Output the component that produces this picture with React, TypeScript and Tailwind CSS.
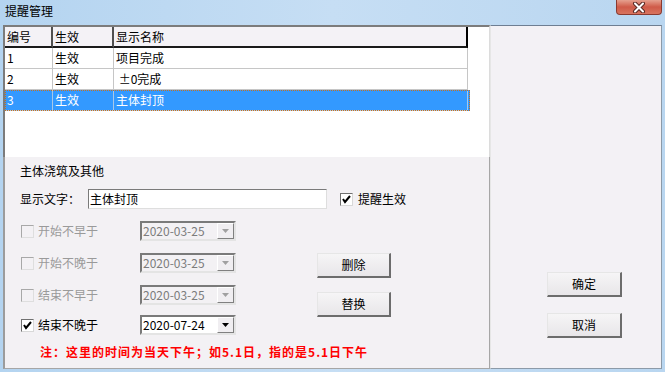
import React from "react";

const font = "font-['Noto_Sans_CJK_SC','Liberation_Sans',sans-serif]";

const cols = ["w-[48px]", "w-[61px]", "w-[354px]"];

const rows = [
  ["1", "生效", "项目完成"],
  ["2", "生效", " ±0完成"],
  ["3", "生效", "主体封顶"],
];

const CheckBox = ({ checked, disabled }: { checked?: boolean; disabled?: boolean }) => (
  <div
    className={
      "w-[13px] h-[13px] border flex items-center justify-center " +
      (disabled
        ? "bg-[#f3f1f4] border-t-[#a8a8a8] border-l-[#a8a8a8] border-b-[#dedede] border-r-[#dedede]"
        : "bg-white border-t-[#707070] border-l-[#707070] border-b-[#d8d8d8] border-r-[#d8d8d8]")
    }
  >
    {checked && (
      <svg width="9" height="9" viewBox="0 0 9 9">
        <polyline points="1,4 3,7 8,1" fill="none" stroke="#000" strokeWidth="2" />
      </svg>
    )}
  </div>
);

const Combo = ({ value, disabled }: { value: string; disabled?: boolean }) => (
  <div className="w-[96px] h-[20px] flex border-2 border-t-[#7a7a7a] border-l-[#7a7a7a] border-b-[#e4e4e4] border-r-[#e4e4e4]">
    <div
      className={
        "flex-1 pl-[1px] leading-[16px] text-[12px] " +
        (disabled ? "bg-[#f3f1f4] text-[#7c7c7c]" : "bg-white text-black")
      }
    >
      {value}
    </div>
    <div className="w-[17px] h-full bg-[#f0eef1] border border-t-white border-l-white border-b-[#808080] border-r-[#808080] flex items-center justify-center">
      <svg width="7" height="4" viewBox="0 0 7 4">
        <polygon points="0,0 7,0 3.5,4" fill={disabled ? "#a0a0a0" : "#000"} />
      </svg>
    </div>
  </div>
);

const Btn = ({ label, w }: { label: string; w: string }) => (
  <div
    className={
      w +
      " h-[25px] flex items-center justify-center text-[12px] text-black bg-gradient-to-b from-[#f6f5f6] to-[#e8e6e9] border-t border-l border-t-[#e6e6e6] border-l-[#e6e6e6] border-r-2 border-b-2 border-r-[#6c6c6c] border-b-[#6c6c6c]"
    }
  >
    {label}
  </div>
);

const DateRow = ({
  label,
  value,
  checked,
  disabled,
  mt,
}: {
  label: string;
  value: string;
  checked?: boolean;
  disabled?: boolean;
  mt: string;
}) => (
  <div className={"flex items-center h-[20px] " + mt}>
    <div className="w-[120px] flex items-center pl-[1px]">
      <CheckBox checked={checked} disabled={disabled} />
      <span className={"ml-[4px] text-[12px] " + (disabled ? "text-[#9a9a9a]" : "text-black")}>{label}</span>
    </div>
    <Combo value={value} disabled={disabled} />
  </div>
);

export default function App() {
  return (
    <div className={"w-[665px] h-[372px] flex flex-col overflow-hidden bg-gradient-to-r from-[#b4d4f0] via-[#c6def4] to-[#b9d6f0] " + font}>
      {/* title bar */}
      <div className="relative h-[25px] shrink-0">
        <div className="pl-[5px] pt-[3px] text-[12px] leading-[16px] text-black">提醒管理</div>
        <div className="absolute right-[3px] top-0 w-[46px] h-[15px] rounded-b-[4px] border border-t-0 border-[#8a3a30] bg-gradient-to-b from-[#e5a08f] via-[#cf5a48] to-[#d8745f] flex items-center justify-center">
          <svg width="14" height="11" viewBox="0 0 14 11">
            <path d="M3 1.5 L11 9.5 M11 1.5 L3 9.5" stroke="#5a2a24" strokeWidth="4" strokeLinecap="round" />
            <path d="M3 1.5 L11 9.5 M11 1.5 L3 9.5" stroke="#ffffff" strokeWidth="2" strokeLinecap="round" />
          </svg>
        </div>
      </div>

      <div className="flex flex-1 px-[3px] pb-[3px]">
        {/* left panel */}
        <div className="w-[487px] flex flex-col">
          {/* list */}
          <div className="h-[132px] bg-white border-t-2 border-l-2 border-[#7c7c7c] border-r border-r-[#dcdcdc]">
            <div className="flex">
              {["编号", "生效", "显示名称"].map((h, i) => (
                <div
                  key={h}
                  className={
                    cols[i] +
                    " h-[21px] bg-[#f4f2f6] pl-[2px] leading-[19px] text-[12px] text-black border-b-2 border-b-[#1a1a1a] border-r-2 " +
                    (i === 2 ? "border-r-black" : "border-r-[#505050]")
                  }
                >
                  {h}
                </div>
              ))}
            </div>
            {rows.map((r, ri) => {
              const sel = ri === 2;
              return (
                <div
                  key={ri}
                  className={
                    "flex w-[465px] " +
                    (sel ? "bg-[#3399ff] text-white outline-1 outline-dotted outline-[#c8701c] -outline-offset-1" : "text-black")
                  }
                >
                  {r.map((c, ci) => (
                    <div
                      key={ci}
                      className={
                        cols[ci] +
                        " h-[21px] pl-[2px] leading-[20px] text-[12px] whitespace-pre border-b border-r " +
                        (sel ? "border-[#a8c8e8]" : "border-[#c6c6c6]")
                      }
                    >
                      {c}
                    </div>
                  ))}
                </div>
              );
            })}
          </div>

          {/* form */}
          <div className="flex-1 bg-[#f3f1f4] border-l-2 border-l-[#9c9c9c] border-r border-r-[#a6a6a6] border-b border-b-[#a6a6a6] pl-[15px] pt-[6px]">
            <div className="h-[16px] leading-[16px] text-[12px] text-black">主体浇筑及其他</div>

            <div className="flex items-center h-[20px] mt-[10px]">
              <div className="w-[68px] text-[12px] text-black">显示文字：</div>
              <div className="w-[239px] h-[20px] bg-white border border-t-[#7a7a7a] border-l-[#7a7a7a] border-b-[#dedede] border-r-[#dedede] pl-[1px] leading-[18px] text-[12px] text-black">
                主体封顶
              </div>
              <div className="ml-[13px] flex items-center">
                <CheckBox checked />
                <span className="ml-[5px] text-[12px] text-black">提醒生效</span>
              </div>
            </div>

            <div className="flex mt-[12px]">
              <div className="flex flex-col">
                <DateRow label="开始不早于" value="2020-03-25" disabled mt="" />
                <DateRow label="开始不晚于" value="2020-03-25" disabled mt="mt-[12px]" />
                <DateRow label="结束不早于" value="2020-03-25" disabled mt="mt-[12px]" />
                <DateRow label="结束不晚于" value="2020-07-24" checked mt="mt-[10px]" />
              </div>
              <div className="flex flex-col ml-[81px]">
                <div className="mt-[32px]">
                  <Btn label="删除" w="w-[74px]" />
                </div>
                <div className="mt-[14px]">
                  <Btn label="替换" w="w-[74px]" />
                </div>
              </div>
            </div>

            <div className="mt-[9px] ml-[20px] h-[16px] leading-[16px] text-[12px] font-bold tracking-[1px] text-[#ff0000] whitespace-nowrap">
              注：这里的时间为当天下午；如5.1日，指的是5.1日下午
            </div>
          </div>
        </div>

        {/* right panel */}
        <div className="flex-1 bg-[#f3f1f5] border-t border-t-[#6e7e92] border-l border-l-[#e6e6e6] border-r border-r-[#8c9aa8] border-b border-b-[#8c9aa8] flex flex-col justify-end pl-[56px] pb-[30px]">
          <Btn label="确定" w="w-[75px]" />
          <div className="mt-[16px]">
            <Btn label="取消" w="w-[75px]" />
          </div>
        </div>
      </div>
    </div>
  );
}
